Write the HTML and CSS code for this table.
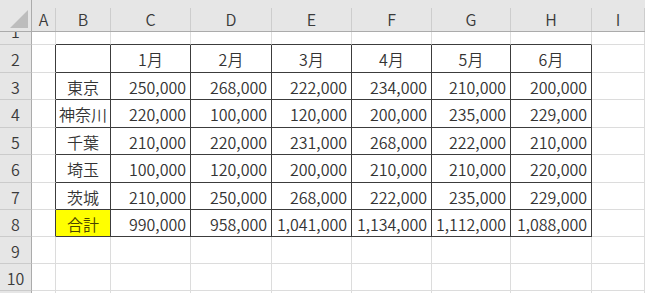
FILE: index.html
```html
<!DOCTYPE html>
<html lang="ja">
<head>
<meta charset="utf-8">
<title>Sheet</title>
<link rel="stylesheet" href="styles.css">
</head>
<body>
<div class="sheet">
  <div class="hrow">
    <div class="hc rh corner"><svg class="tri" width="18" height="18" viewBox="0 0 18 18"><polygon points="18,0 18,18 0,18" fill="#bdbdbd"/></svg></div>
    <div class="hc ca">A</div>
    <div class="hc cb">B</div>
    <div class="hc cc">C</div>
    <div class="hc cd">D</div>
    <div class="hc ce">E</div>
    <div class="hc cf">F</div>
    <div class="hc cg">G</div>
    <div class="hc ch">H</div>
    <div class="hc ci">I</div>
  </div>

  <div class="row r1">
    <div class="c rh n"><span>1</span></div>
    <div class="c ca"></div>
    <div class="c cb tb"></div>
    <div class="c cc tb"></div>
    <div class="c cd tb"></div>
    <div class="c ce tb"></div>
    <div class="c cf tb"></div>
    <div class="c cg tb"></div>
    <div class="c ch tb"></div>
    <div class="c ci"></div>
  </div>

  <div class="row r28">
    <div class="c rh n">2</div>
    <div class="c ca tl"></div>
    <div class="c cb t"></div>
    <div class="c cc t mid">1月</div>
    <div class="c cd t mid">2月</div>
    <div class="c ce t mid">3月</div>
    <div class="c cf t mid">4月</div>
    <div class="c cg t mid">5月</div>
    <div class="c ch t mid">6月</div>
    <div class="c ci"></div>
  </div>

  <div class="row r27">
    <div class="c rh n">3</div>
    <div class="c ca tl"></div>
    <div class="c cb t mid">東京</div>
    <div class="c cc t num">250,000</div>
    <div class="c cd t num">268,000</div>
    <div class="c ce t num">222,000</div>
    <div class="c cf t num">234,000</div>
    <div class="c cg t num">210,000</div>
    <div class="c ch t num">200,000</div>
    <div class="c ci"></div>
  </div>

  <div class="row r28">
    <div class="c rh n">4</div>
    <div class="c ca tl"></div>
    <div class="c cb t mid">神奈川</div>
    <div class="c cc t num">220,000</div>
    <div class="c cd t num">100,000</div>
    <div class="c ce t num">120,000</div>
    <div class="c cf t num">200,000</div>
    <div class="c cg t num">235,000</div>
    <div class="c ch t num">229,000</div>
    <div class="c ci"></div>
  </div>

  <div class="row r27">
    <div class="c rh n">5</div>
    <div class="c ca tl"></div>
    <div class="c cb t mid">千葉</div>
    <div class="c cc t num">210,000</div>
    <div class="c cd t num">220,000</div>
    <div class="c ce t num">231,000</div>
    <div class="c cf t num">268,000</div>
    <div class="c cg t num">222,000</div>
    <div class="c ch t num">210,000</div>
    <div class="c ci"></div>
  </div>

  <div class="row r28">
    <div class="c rh n">6</div>
    <div class="c ca tl"></div>
    <div class="c cb t mid">埼玉</div>
    <div class="c cc t num">100,000</div>
    <div class="c cd t num">120,000</div>
    <div class="c ce t num">200,000</div>
    <div class="c cf t num">210,000</div>
    <div class="c cg t num">210,000</div>
    <div class="c ch t num">220,000</div>
    <div class="c ci"></div>
  </div>

  <div class="row r27">
    <div class="c rh n">7</div>
    <div class="c ca tl"></div>
    <div class="c cb t mid">茨城</div>
    <div class="c cc t num">210,000</div>
    <div class="c cd t num">250,000</div>
    <div class="c ce t num">268,000</div>
    <div class="c cf t num">222,000</div>
    <div class="c cg t num">235,000</div>
    <div class="c ch t num">229,000</div>
    <div class="c ci"></div>
  </div>

  <div class="row r27">
    <div class="c rh n">8</div>
    <div class="c ca tl"></div>
    <div class="c cb t mid total">合計</div>
    <div class="c cc t num">990,000</div>
    <div class="c cd t num">958,000</div>
    <div class="c ce t num">1,041,000</div>
    <div class="c cf t num">1,134,000</div>
    <div class="c cg t num">1,112,000</div>
    <div class="c ch t num">1,088,000</div>
    <div class="c ci"></div>
  </div>

  <div class="row r27">
    <div class="c rh n">9</div>
    <div class="c ca"></div>
    <div class="c cb"></div>
    <div class="c cc"></div>
    <div class="c cd"></div>
    <div class="c ce"></div>
    <div class="c cf"></div>
    <div class="c cg"></div>
    <div class="c ch"></div>
    <div class="c ci"></div>
  </div>

  <div class="row r27">
    <div class="c rh n">10</div>
    <div class="c ca"></div>
    <div class="c cb"></div>
    <div class="c cc"></div>
    <div class="c cd"></div>
    <div class="c ce"></div>
    <div class="c cf"></div>
    <div class="c cg"></div>
    <div class="c ch"></div>
    <div class="c ci"></div>
  </div>

  <div class="row r3">
    <div class="c rh n"></div>
    <div class="c ca"></div>
    <div class="c cb"></div>
    <div class="c cc"></div>
    <div class="c cd"></div>
    <div class="c ce"></div>
    <div class="c cf"></div>
    <div class="c cg"></div>
    <div class="c ch"></div>
    <div class="c ci"></div>
  </div>
</div>
</body>
</html>
```

FILE: styles.css
```css
* { box-sizing: border-box; }
html, body { margin: 0; padding: 0; background: #ffffff; }
body { width: 645px; height: 293px; overflow: hidden; }

.sheet {
  font-family: "Noto Sans CJK JP", "Noto Sans", sans-serif;
  font-size: 16px;
  font-weight: 350;
  color: #333333;
  width: 645px;
}

/* column widths (including the 1px right gridline) */
.rh { width: 32px; flex: none; }
.ca { width: 24px; flex: none; }
.cb { width: 55px; flex: none; }
.cc { width: 80px; flex: none; }
.cd { width: 81px; flex: none; }
.ce { width: 80px; flex: none; }
.cf { width: 80px; flex: none; }
.cg { width: 79px; flex: none; }
.ch { width: 81px; flex: none; }
.ci { flex: 1 1 auto; }

/* column header */
.hrow {
  display: flex;
  height: 32px;
  padding-top: 8px;
  background: #e6e6e6;
  border-bottom: 1px solid #ababab;
}
.hc {
  height: 23px;
  border-right: 1px solid #cdcdcd;
  display: flex;
  align-items: center;
  justify-content: center;
  color: #3a3a3a;
  font-size: 16px;
  line-height: 23px;
}
.hc.rh {
  border-right: 1px solid #ababab;
  margin-top: -8px;
  height: 31px;
}
.corner { display: block; }
.tri { display: block; margin: 10px 0 0 10px; }

/* rows */
.row { display: flex; }
.r1 { height: 13px; }
.r3 { height: 3px; }
.r27 { height: 27px; }
.r28 { height: 28px; }

.c {
  border-right: 1px solid #dcdcdc;
  border-bottom: 1px solid #dcdcdc;
  display: flex;
  align-items: center;
  white-space: nowrap;
  overflow: hidden;
  line-height: 20px;
  padding-top: 1px;
}

/* row header */
.c.rh {
  background: #e6e6e6;
  border-right: 1px solid #ababab;
  border-bottom: 1px solid #cbcbcb;
  justify-content: center;
  color: #3a3a3a;
}
.r1 .c.rh { align-items: flex-end; padding-top: 0; }
.r1 .c.rh span { display: block; line-height: 26px; }

/* table borders */
.tb { border-bottom-color: #3c3c3c; }
.tl { border-right-color: #3c3c3c; }
.t { border-right-color: #3c3c3c; border-bottom-color: #3c3c3c; }

.mid { justify-content: center; }
.num { justify-content: flex-end; padding-right: 4px; }
.total { background: #ffff00; color: #4a4300; }
```
